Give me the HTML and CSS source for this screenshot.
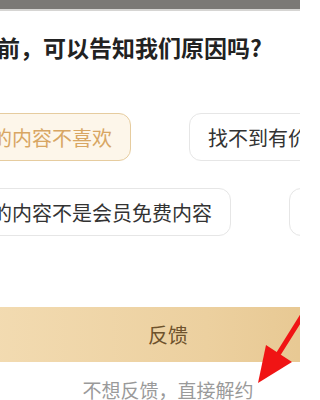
FILE: index.html
```html
<!DOCTYPE html>
<html lang="zh">
<head>
<meta charset="utf-8">
<link rel="stylesheet" href="styles.css">
</head>
<body>
<div class="screen">
  <div class="topbar"></div>
  <div class="sheet">
    <h1 class="title">前，可以告知我们原因吗?</h1>
    <div class="chips">
      <div class="row">
        <span class="chip chip-active">的内容不喜欢</span>
        <span class="chip">找不到有价值的内容</span>
      </div>
      <div class="row">
        <span class="chip">的内容不是会员免费内容</span>
        <span class="chip">其他原因</span>
      </div>
    </div>
    <button class="submit">反馈</button>
    <div class="skip">不想反馈，直接解约</div>
  </div>
  <svg class="arrow" width="300" height="400" viewBox="0 0 300 400">
    <line x1="306" y1="310" x2="279" y2="353" stroke="#f01414" stroke-width="5" stroke-linecap="round"/>
    <polygon points="258,383 266,345 292,362" fill="#f01414"/>
  </svg>
</div>
</body>
</html>
```

FILE: styles.css
```css
html, body {
  margin: 0;
  padding: 0;
  background: #ffffff;
  font-family: "Noto Sans CJK SC", "Noto Sans", sans-serif;
}

.screen {
  position: relative;
  width: 300px;
  height: 400px;
  overflow: hidden;
  background: #ffffff;
}

.topbar {
  height: 9px;
  background: #7b7976;
  border-bottom: 2px solid #d6d5d3;
}

.sheet {
  width: 390px;
  margin-left: -27px;
  display: flex;
  flex-direction: column;
}

.title {
  margin: 20px 0 0 24px;
  font-size: 23px;
  line-height: 32px;
  font-weight: 700;
  color: #222222;
  white-space: nowrap;
}

.chips {
  margin-top: 50px;
  display: flex;
  flex-direction: column;
  gap: 27px;
}

.row {
  display: flex;
  gap: 58px;
  white-space: nowrap;
}

.chip {
  flex: none;
  height: 46px;
  padding: 0 18px;
  border: 1px solid #e6e6e6;
  border-radius: 12px;
  display: flex;
  align-items: center;
  font-size: 20px;
  color: #333333;
  background: #ffffff;
}

.chip-active {
  background: #fdf6ea;
  border-color: #e6cc9f;
  color: #d8a663;
}

.submit {
  margin: 71px 0 0 0;
  height: 55px;
  border: none;
  border-radius: 0;
  background: linear-gradient(90deg, #f3dcb3 0%, #ecd09f 60%, #e5c48c 100%);
  font-family: inherit;
  font-size: 20px;
  color: #6e522c;
  padding: 0;
}

.skip {
  margin-top: 16px;
  text-align: center;
  font-size: 19px;
  line-height: 24px;
  color: #9a9a9a;
}

.arrow {
  position: absolute;
  left: 0;
  top: 0;
  pointer-events: none;
}
```
